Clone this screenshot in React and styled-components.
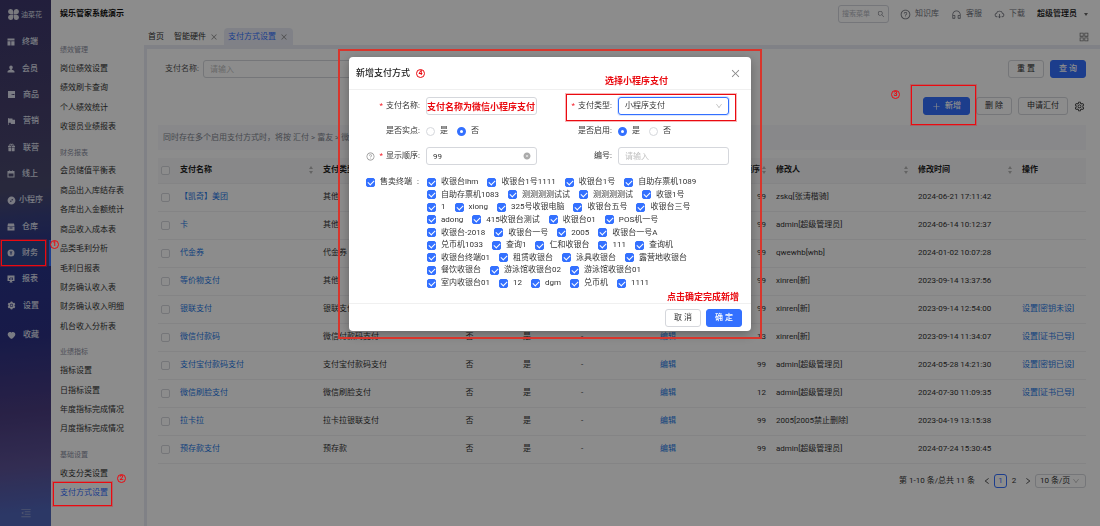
import React from 'react';
import styled, { createGlobalStyle, css } from 'styled-components';
import {
  AiFillCloseCircle, AiFillCompass, AiFillFlag, AiFillGift, AiFillHeart,
  AiFillSetting, AiFillWallet, AiOutlineAppstore,
  AiOutlineClose, AiOutlineCloudDownload, AiOutlineCustomerService, AiOutlineDown, AiOutlineLeft,
  AiOutlineMenuFold, AiOutlinePlus, AiOutlineQuestionCircle, AiOutlineRight, AiOutlineSearch,
  AiOutlineSetting,
} from 'react-icons/ai';

const BLUE = '#3370ff';
const LINK = '#1e78e6';
const MARK = '#ea0a10';

const GlobalStyle = createGlobalStyle`
  * { box-sizing: border-box; }
  body {
    margin: 0;
    background: #fff;
    color: #333;
    font: 8px/12px Roboto, "Noto Sans CJK SC", sans-serif;
  }
  button, input, select { font: inherit; color: inherit; margin: 0; }
  ul { margin: 0; padding: 0; list-style: none; }
  a { color: inherit; text-decoration: none; }
  svg { display: block; flex: none; }
`;

const Shell = styled.div`
  display: flex;
  min-height: 100vh;
  position: relative;
`;

/* main navigation */
const Side = styled.nav`
  width: 51px;
  flex: none;
  display: flex;
  flex-direction: column;
  color: #dfe1ee;
  background: linear-gradient(174deg, #3e386d 0%, #453f6c 20%, #4a4a6e 36%, #3a4280 41%, #28338a 49%, #2c3184 64%, #4b3d80 78%, #5c5296 88%, #5066bb 97%);
`;
const Brand = styled.div`
  height: 29px;
  padding-left: 8px;
  display: flex;
  align-items: center;
  gap: 2px;
  font-size: 7px;
  white-space: nowrap;
`;
const SideList = styled.ul`
  min-height: 290px;
  display: flex;
  flex-direction: column;
`;
const SideItem = styled.li`
  flex: 1 0 26px;
  display: flex;
  border-right: 2px solid ${p => (p.$active ? BLUE : 'transparent')};
  background: ${p => (p.$active ? '#30488f' : 'transparent')};
`;
const SideLink = styled.a`
  flex: 1;
  display: flex;
  align-items: center;
  padding-left: 7px;
  font-weight: 500;
  span { width: 30px; text-align: center; }
`;
const Favourite = styled.div`
  display: flex;
  height: 26px;
  margin-top: 3px;
`;
const Fold = styled.button`
  margin: auto auto 7px;
  padding: 0;
  border: 0;
  background: none;
  color: #8f9ac9;
  font-size: 12px;
`;

const Body = styled.div`
  flex: 1;
  min-width: 0;
  display: flex;
  flex-direction: column;
`;
const Header = styled.header`
  height: 28px;
  padding: 0 12px 0 9px;
  display: flex;
  align-items: center;
  color: #70727c;
`;
const SystemName = styled.h1`
  margin: 0 auto 0 0;
  font-size: 8px;
  font-weight: 700;
  color: #111;
`;
const Search = styled.label`
  width: 51px;
  height: 18px;
  margin-right: 11px;
  padding: 0 3px;
  display: flex;
  align-items: center;
  border: 1px solid #d5d7de;
  border-radius: 3px;
  input {
    width: 100%;
    min-width: 0;
    border: 0;
    padding: 0;
    background: none;
    font-size: 7px;
    &::placeholder { color: #b4b6be; }
  }
`;
const Tool = styled.a`
  display: flex;
  align-items: center;
  gap: 4px;
  margin-right: 12px;
  svg { font-size: 11px; }
`;
const Account = styled.button`
  display: flex;
  align-items: center;
  gap: 7px;
  border: 0;
  padding: 0;
  background: none;
  color: #111;
  font-weight: 500;
`;
const Caret = styled.i`
  border: 2px solid transparent;
  border-top: 3px solid #666;
  border-bottom: 0;
`;

const Columns = styled.div`
  flex: 1;
  display: flex;
`;
const SubNav = styled.nav`
  width: 93px;
  flex: none;
  padding: 13px 0 23px 9px;
  display: flex;
  flex-direction: column;
  gap: 7px;
`;
const Group = styled.section`
  flex: ${p => p.$count} 0 auto;
  display: flex;
  flex-direction: column;
  h2 {
    margin: 0;
    height: 18px;
    font-size: 7px;
    line-height: 18px;
    font-weight: 400;
    color: #8a8ea0;
  }
  ul { flex: 1; display: flex; flex-direction: column; }
  li { flex: 1 0 19px; display: flex; align-items: center; }
`;
const SubLink = styled.a`
  color: ${p => (p.$active ? BLUE : '#333')};
`;

const Main = styled.main`
  flex: 1;
  min-width: 0;
`;
const Tabs = styled.div`
  height: 17px;
  display: flex;
  align-items: center;
  padding-right: 10px;
  > svg { margin-left: auto; font-size: 12px; color: #777; }
`;
const Tab = styled.a`
  height: 17px;
  display: flex;
  align-items: center;
  gap: 4px;
  padding: 0 5px 0 4px;
  margin-right: 1px;
  border-radius: 4px 4px 0 0;
  color: ${p => (p.$active ? BLUE : '#333')};
  background: ${p => (p.$active ? '#e9ecf6' : 'transparent')};
  svg { font-size: 8px; color: #888; }
`;
const Panel = styled.div`
  border-top: 4px solid #e9ebf4;
  border-left: 3px solid #e9ebf4;
  min-height: calc(100vh - 45px);
  padding: 11px 14px 0 11px;
`;
const Bar = styled.div`
  display: flex;
  align-items: center;
  justify-content: flex-end;
  gap: 6px;
  height: 18px;
  & + & { margin-top: 19px; }
  > svg { font-size: 11px; margin-right: 1px; color: #222; }
`;
const FilterLabel = styled.label`
  margin: 0 auto 0 7px;
  display: flex;
  align-items: center;
  gap: 4px;
  color: #555;
`;
const Button = styled.button`
  height: 18px;
  min-width: 36px;
  padding: 0 8px;
  display: flex;
  align-items: center;
  justify-content: center;
  gap: 4px;
  border-radius: 3px;
  white-space: pre;
  border: 1px solid ${p => (p.$primary ? BLUE : '#d5d7dc')};
  background: ${p => (p.$primary ? BLUE : '#fff')};
  color: ${p => (p.$primary ? '#fff' : '#333')};
  font-weight: ${p => (p.$primary ? 500 : 400)};
  svg { font-size: 9px; }
`;
const inputStyle = css`
  height: 18px;
  width: 100%;
  min-width: 0;
  border: 1px solid #d5d7dc;
  border-radius: 3px;
  background: #fff;
  padding: 0 6px;
  outline: 0;
  &::placeholder { color: #bfbfbf; opacity: 1; }
`;
const TextInput = styled.input`
  ${inputStyle}
`;
const FilterInput = styled.input`
  ${inputStyle}
  width: 152px;
`;
const Notice = styled.p`
  margin: 10px 0 8px;
  padding: 0 5px;
  height: 25px;
  line-height: 25px;
  background: #f7f8fb;
  color: #82858f;
`;

const Table = styled.table`
  width: 100%;
  table-layout: fixed;
  border-collapse: collapse;
  th, td {
    padding: 0 5px;
    text-align: left;
    white-space: nowrap;
    border-bottom: 1px solid #f0f0f3;
  }
  th:first-child, td:first-child { padding: 0 3px; }
  th { height: 25px; background: #f8f8f9; color: #222; }
  td { height: 28px; }
`;
const Head = styled.div`
  display: flex;
  align-items: center;
  gap: 2px;
  justify-content: ${p => p.$align || 'space-between'};
`;
const Cell = styled.td`
  && { text-align: ${p => p.$align || 'left'}; }
`;
const Sorter = styled.span`
  display: grid;
  gap: 2px;
  &::before, &::after { content: ''; border: 2px solid transparent; }
  &::before { border-top: 0; border-bottom: 3px solid #b5b5b5; }
  &::after { border-bottom: 0; border-top: 3px solid #b5b5b5; }
`;
const Link = styled.a`
  color: ${LINK};
`;

const Tick = styled.input.attrs({ type: 'checkbox' })`
  appearance: none;
  display: block;
  flex: none;
  position: relative;
  width: 9px;
  height: 9px;
  border: 1px solid #d6d8dd;
  border-radius: 2px;
  background: #fff;
  &:checked { background: ${BLUE}; border-color: ${BLUE}; }
  &:checked::after {
    content: '';
    position: absolute;
    left: 2px;
    top: 0;
    width: 3px;
    height: 5px;
    border: solid #fff;
    border-width: 0 1px 1px 0;
    transform: rotate(45deg);
  }
`;
const Radio = styled.input.attrs({ type: 'radio' })`
  appearance: none;
  display: block;
  flex: none;
  width: 9px;
  height: 9px;
  border: 1px solid #d5d7dc;
  border-radius: 50%;
  background: #fff;
  &:checked { border: 3px solid ${BLUE}; }
`;
const Option = styled.label`
  display: flex;
  align-items: center;
  gap: 5px;
  white-space: nowrap;
`;
const Options = styled.div`
  display: flex;
  align-items: center;
  gap: 9px;
`;

const Pager = styled.div`
  margin-top: 10px;
  display: flex;
  align-items: center;
  justify-content: flex-end;
  height: 14px;
`;
const Total = styled.span`
  margin-right: 5px;
`;
const PageButton = styled.button`
  width: ${p => (p.$current ? 13 : 14)}px;
  height: 14px;
  padding: 0;
  display: grid;
  place-items: center;
  border: 1px solid ${p => (p.$current ? BLUE : 'transparent')};
  border-radius: 3px;
  background: none;
  color: ${p => (p.$current ? BLUE : '#333')};
`;
const Picker = styled.div`
  position: relative;
  width: ${p => p.$width || '100%'};
  select {
    ${inputStyle}
    appearance: none;
    height: ${p => (p.$small ? 14 : 18)}px;
    padding: 0 ${p => (p.$small ? 4 : 6)}px;
    ${p => p.$focused && css`border-color: ${BLUE}; box-shadow: 0 0 0 1px #dbe6ff;`}
  }
  svg { position: absolute; right: 6px; top: calc(50% - 4px); color: #bbb; pointer-events: none; }
`;

/* dialog */
const Mask = styled.div`
  position: fixed;
  inset: 0;
  display: flex;
  align-items: flex-start;
  justify-content: center;
  padding-top: 57px;
  background: rgba(0, 0, 0, 0.45);
`;
const Dialog = styled.div`
  position: relative;
  width: 402px;
  border-radius: 4px;
  background: #fff;
  box-shadow: 0 3px 12px rgba(0, 0, 0, 0.3);
`;
const DialogHead = styled.div`
  height: 33px;
  padding: 0 10px 0 7px;
  display: flex;
  align-items: center;
  gap: 6px;
  border-bottom: 1px solid #f0f0f0;
  h2 { margin: 0; font-size: 9px; font-weight: 500; color: #222; }
  button { margin-left: auto; padding: 0; border: 0; background: none; color: #888; font-size: 11px; }
`;
const Form = styled.form`
  padding: 7px 22px 0 17px;
  display: grid;
  grid-template-columns: 60px 1fr 81px 1fr;
  grid-auto-rows: 18px;
  row-gap: 7px;
  align-items: center;
`;
const Label = styled.label`
  display: flex;
  align-items: center;
  justify-content: flex-end;
  gap: 3px;
  padding-right: 6px;
  white-space: nowrap;
  b { color: #f5222d; font-weight: 400; }
  svg { font-size: 9px; color: #888; margin-right: auto; }
`;
const Clearable = styled.div`
  position: relative;
  svg { position: absolute; right: 6px; top: 5px; color: #aaa; }
`;
const NamedInput = styled.input`
  ${inputStyle}
  padding: 0;
  color: ${MARK};
  font-size: 9px;
  font-weight: 700;
`;
const Terminals = styled.div`
  display: flex;
  gap: 7px;
  padding: 11px 20px 14px 17px;
`;
const TerminalRows = styled.div`
  display: flex;
  flex-direction: column;
  justify-content: space-between;
  height: 113px;
`;
const TerminalTitle = styled.div`
  display: flex;
  align-items: flex-start;
  gap: 5px;
  width: 54px;
`;
const DialogFoot = styled.div`
  height: 28px;
  padding: 0 9px;
  display: flex;
  align-items: center;
  justify-content: flex-end;
  gap: 5px;
  border-top: 1px solid #f0f0f0;
`;

/* tutorial marks drawn over the screen */
const Mark = styled.div`
  position: absolute;
  pointer-events: none;
  border: ${p => (p.$outer ? '2px solid #d8352c' : `1px solid ${MARK}`)};
  ${p => !p.$outer && css`box-shadow: 0 0 0 1px rgba(234, 10, 16, 0.3);`}
`;
const Note = styled.span`
  position: absolute;
  color: ${MARK};
  font-size: 9px;
  font-weight: 700;
  line-height: 12px;
  white-space: nowrap;
`;
const Step = styled.span`
  width: 9px;
  height: 9px;
  display: grid;
  place-items: center;
  border: 1px solid ${MARK};
  border-radius: 50%;
  color: ${MARK};
  font-size: 7px;
  font-weight: 700;
  line-height: 7px;
  ${p => p.$floating && css`position: absolute;`}
`;

/* solid glyphs of the main menu, on a 16 unit grid */
const glyph = d => function Glyph({ size }) {
  return (
    <svg width={size} height={size} viewBox="0 0 16 16" fill="currentColor" fillRule="evenodd" aria-hidden="true">
      <path d={d} />
    </svg>
  );
};
const TerminalIcon = glyph('M1 1h14v4H1zM1 6.500h6V15H1zM8.500 6.500H15V15H8.500z');
const MemberIcon = glyph('M8 1a3.500 3.500 0 0 1 3.500 3.500c0 2-1 3.300-2 4v1c3 .6 5.500 1.500 5.500 4V15H1v-1.500c0-2.500 2.500-3.400 5.500-4v-1c-1-.7-2-2-2-4A3.500 3.500 0 0 1 8 1z');
const OnlineIcon = glyph('M1 2h3V1h2v1h4V1h2v1h3v13H1zM3 7v6h10V7z');
const StoreIcon = glyph('M2 1h12l1 5H1zM1 7h14v8H1zM5 9v2h6V9z');
const FinanceIcon = glyph('M8 1a7 7 0 1 1 0 14A7 7 0 0 1 8 1zM5 4l2 3.500H5.500v1.200h1.700V12h1.600V8.700h1.700V7.500H9L11 4H9.500L8 6.800 6.500 4z');
const ReportIcon = glyph('M1 1h14v11H9.500l2 3h-7l2-3H1zM4 6v4h1.500V6zM7.200 4v6h1.500V4zM10.500 5v5H12V5z');

const mainMenu = [
  ['终端', TerminalIcon, 8], ['会员', MemberIcon, 8], ['商品', AiFillWallet, 9], ['营销', AiFillFlag, 9],
  ['联营', AiFillGift, 9], ['线上', OnlineIcon, 8], ['小程序', AiFillCompass, 9], ['仓库', StoreIcon, 8],
  ['财务', FinanceIcon, 8], ['报表', ReportIcon, 8], ['设置', AiFillSetting, 9],
];
const subMenu = [
  ['绩效管理', ['岗位绩效设置', '绩效刷卡查询', '个人绩效统计', '收银员业绩报表']],
  ['财务报表', ['会员储值平衡表', '商品出入库结存表', '各库出入金额统计', '商品收入成本表', '品类毛利分析',
    '毛利日报表', '财务确认收入表', '财务确认收入明细', '机台收入分析表']],
  ['业绩指标', ['指标设置', '日指标设置', '年度指标完成情况', '月度指标完成情况']],
  ['基础设置', ['收支分类设置', '支付方式设置']],
];
const columnWidths = [17, 143, 122, 59, 56, 54, 118, 44, 142, 104, 69];
const rows = [
  ['【凯奇】美团', '其他', 99, 'zskq[张涛楷骑]', '2024-06-21 17:11:42', ''],
  ['卡', '其他', 99, 'admin[超级管理员]', '2024-06-14 10:12:37', ''],
  ['代金券', '代金券', 99, 'qwewhb[whb]', '2024-01-02 10:07:28', ''],
  ['等价物支付', '其他', 99, 'xinren[新]', '2023-09-14 13:37:56', ''],
  ['银联支付', '银联支付', 99, 'xinren[新]', '2023-09-14 12:54:00', '设置[密钥未设]'],
  ['微信付款码', '微信付款码支付', 13, 'xinren[新]', '2023-09-14 11:34:07', '设置[证书已导]'],
  ['支付宝付款码支付', '支付宝付款码支付', 99, 'admin[超级管理员]', '2024-05-28 14:21:30', '设置[密钥已设]'],
  ['微信刷脸支付', '微信刷脸支付', 12, 'admin[超级管理员]', '2024-07-30 11:09:35', '设置[证书已导]'],
  ['拉卡拉', '拉卡拉银联支付', 99, '2005[2005禁止删除]', '2023-04-19 13:15:38', ''],
  ['预存款支付', '预存款', 99, 'admin[超级管理员]', '2024-07-24 15:30:45', ''],
];
const terminals = [
  ['收银台lhm', '收银台1号1111', '收银台1号', '自助存票机1089'],
  ['自助存票机1083', '测测测测试试', '测测测测试', '收银1号'],
  ['1', 'xiong', '325号收银电脑', '收银台五号', '收银台三号'],
  ['adong', '415收银台测试', '收银台01', 'POS机一号'],
  ['收银台-2018', '收银台一号', '2005', '收银台一号A'],
  ['兑币机1033', '查询1', '仁和收银台', '111', '查询机'],
  ['收银台终端01', '租赁收银台', '泳具收银台', '露营地收银台'],
  ['餐饮收银台', '游泳馆收银台02', '游泳馆收银台01'],
  ['室内收银台01', '12', 'dgm', '兑币机', '1111'],
];

function Logo() {
  return (
    <svg width="11" height="11" viewBox="0 0 12 12" fill="#dcdde6" aria-hidden="true">
      <path d="M3 0a2.800 2.800 0 0 1 2.700 2.800v2.900H2.800A2.800 2.800 0 1 1 3 0ZM9 0a2.800 2.800 0 0 0-2.700 2.800v2.900h2.900A2.800 2.800 0 1 0 9 0ZM3 12a2.800 2.800 0 0 0 2.700-2.800V6.300H2.800A2.800 2.800 0 1 0 3 12ZM9 12a2.800 2.800 0 0 1-2.700-2.800V6.300h2.900A2.800 2.800 0 1 1 9 12Z" />
    </svg>
  );
}

function YesNo({ name, value }) {
  return (
    <Options role="radiogroup">
      {['是', '否'].map(t => (
        <Option key={t}><Radio name={name} defaultChecked={t === value} />{t}</Option>
      ))}
    </Options>
  );
}

function Navigation() {
  return (
    <Side>
      <Brand><Logo />油菜花</Brand>
      <SideList>
        {mainMenu.map(([text, Icon, size]) => (
          <SideItem key={text} $active={text === '财务'}>
            <SideLink href="#"><Icon size={size} /><span>{text}</span></SideLink>
          </SideItem>
        ))}
      </SideList>
      <Favourite><SideLink href="#"><AiFillHeart size={9} /><span>收藏</span></SideLink></Favourite>
      <Fold aria-label="收起"><AiOutlineMenuFold /></Fold>
    </Side>
  );
}

function PaymentTable() {
  return (
    <Table>
      <colgroup>{columnWidths.map((w, i) => <col key={i} style={{ width: `${w / 9.28}%` }} />)}</colgroup>
      <thead>
        <tr>
          <th><Tick aria-label="全选" /></th>
          <th><Head>支付名称<Sorter /></Head></th>
          <th>支付类型</th>
          <th><Head $align="center">是否实点</Head></th>
          <th><Head $align="center">是否启用</Head></th>
          <th><Head $align="center">编号</Head></th>
          <th><Head $align="center">售卖终端</Head></th>
          <th><Head $align="flex-end">显示顺序<Sorter /></Head></th>
          <th><Head>修改人<Sorter /></Head></th>
          <th><Head>修改时间<Sorter /></Head></th>
          <th>操作</th>
        </tr>
      </thead>
      <tbody>
        {rows.map(([name, type, order, user, time, action]) => (
          <tr key={name}>
            <td><Tick aria-label={name} /></td>
            <td><Link href="#">{name}</Link></td>
            <td>{type}</td>
            <Cell $align="center">否</Cell>
            <Cell $align="center">是</Cell>
            <Cell $align="center">-</Cell>
            <Cell $align="center"><Link href="#">编辑</Link></Cell>
            <Cell $align="right">{order}</Cell>
            <td>{user}</td>
            <td>{time}</td>
            <td>{action && <Link href="#">{action}</Link>}</td>
          </tr>
        ))}
      </tbody>
    </Table>
  );
}

function AddDialog() {
  return (
    <Mask>
      <Dialog role="dialog" aria-labelledby="dialog-title">
        <DialogHead>
          <h2 id="dialog-title">新增支付方式</h2>
          <Step>4</Step>
          <button aria-label="关闭"><AiOutlineClose /></button>
        </DialogHead>
        <Form>
          <Label htmlFor="pay-name"><b>*</b>支付名称:</Label>
          <NamedInput id="pay-name" defaultValue="支付名称为微信小程序支付" />
          <Label htmlFor="pay-type"><b>*</b>支付类型:</Label>
          <Picker $focused>
            <select id="pay-type"><option>小程序支付</option></select>
            <AiOutlineDown size={8} />
          </Picker>
          <Label as="span">是否实点:</Label>
          <YesNo name="real" value="否" />
          <Label as="span">是否启用:</Label>
          <YesNo name="enabled" value="是" />
          <Label htmlFor="order"><AiOutlineQuestionCircle /><b>*</b>显示顺序:</Label>
          <Clearable>
            <TextInput id="order" defaultValue="99" />
            <AiFillCloseCircle size={8} />
          </Clearable>
          <Label htmlFor="code">编号:</Label>
          <TextInput id="code" placeholder="请输入" />
        </Form>
        <Terminals>
          <TerminalTitle>
            <Option><Tick defaultChecked />售卖终端</Option>:
          </TerminalTitle>
          <TerminalRows>
            {terminals.map((line, i) => (
              <Options key={i}>
                {line.map(t => <Option key={t}><Tick defaultChecked />{t}</Option>)}
              </Options>
            ))}
          </TerminalRows>
        </Terminals>
        <DialogFoot>
          <Button>取 消</Button>
          <Button $primary>确 定</Button>
        </DialogFoot>
        <Mark $outer style={{ inset: '-8px -11px' }} />
        <Mark style={{ left: 217, top: 37, width: 170, height: 27 }} />
        <Note style={{ left: 256, top: 18 }}>选择小程序支付</Note>
        <Note style={{ right: 12, bottom: 28 }}>点击确定完成新增</Note>
      </Dialog>
      <Mark style={{ left: 1, top: 240, width: 45, height: 26 }} />
      <Step $floating style={{ left: 50, top: 240 }}>1</Step>
      <Mark style={{ left: 53, top: 482, width: 59, height: 24 }} />
      <Step $floating style={{ left: 117, top: 474 }}>2</Step>
      <Mark style={{ right: 124, top: 85, width: 65, height: 40 }} />
      <Step $floating style={{ right: 200, top: 90 }}>3</Step>
    </Mask>
  );
}

export default function App() {
  return (
    <>
      <GlobalStyle />
      <Shell>
        <Navigation />
        <Body>
          <Header>
            <SystemName>娱乐管家系统演示</SystemName>
            <Search><input placeholder="搜索菜单" aria-label="搜索菜单" /><AiOutlineSearch size={8} /></Search>
            <Tool href="#"><AiOutlineQuestionCircle />知识库</Tool>
            <Tool href="#"><AiOutlineCustomerService />客服</Tool>
            <Tool href="#"><AiOutlineCloudDownload />下载</Tool>
            <Account>超级管理员<Caret /></Account>
          </Header>
          <Columns>
            <SubNav>
              {subMenu.map(([title, items]) => (
                <Group key={title} $count={items.length}>
                  <h2>{title}</h2>
                  <ul>
                    {items.map(t => (
                      <li key={t}><SubLink href="#" $active={t === '支付方式设置'}>{t}</SubLink></li>
                    ))}
                  </ul>
                </Group>
              ))}
            </SubNav>
            <Main>
              <Tabs>
                <Tab href="#">首页</Tab>
                <Tab href="#">智能硬件<AiOutlineClose /></Tab>
                <Tab href="#" $active>支付方式设置<AiOutlineClose /></Tab>
                <AiOutlineAppstore />
              </Tabs>
              <Panel>
                <Bar>
                  <FilterLabel>支付名称:<FilterInput placeholder="请输入" /></FilterLabel>
                  <Button>重 置</Button>
                  <Button $primary>查 询</Button>
                </Bar>
                <Bar>
                  <Button $primary><AiOutlinePlus />新增</Button>
                  <Button>删 除</Button>
                  <Button>申请汇付</Button>
                  <AiOutlineSetting />
                </Bar>
                <Notice>同时存在多个启用支付方式时，将按 汇付 &gt; 富友 &gt; 微信支付</Notice>
                <PaymentTable />
                <Pager>
                  <Total>第 1-10 条/总共 11 条</Total>
                  <PageButton aria-label="上一页"><AiOutlineLeft /></PageButton>
                  <PageButton $current>1</PageButton>
                  <PageButton>2</PageButton>
                  <PageButton aria-label="下一页"><AiOutlineRight /></PageButton>
                  <Picker $small $width="51px">
                    <select aria-label="每页条数"><option>10 条/页</option></select>
                    <AiOutlineDown size={8} />
                  </Picker>
                </Pager>
              </Panel>
            </Main>
          </Columns>
        </Body>
        <AddDialog />
      </Shell>
    </>
  );
}
